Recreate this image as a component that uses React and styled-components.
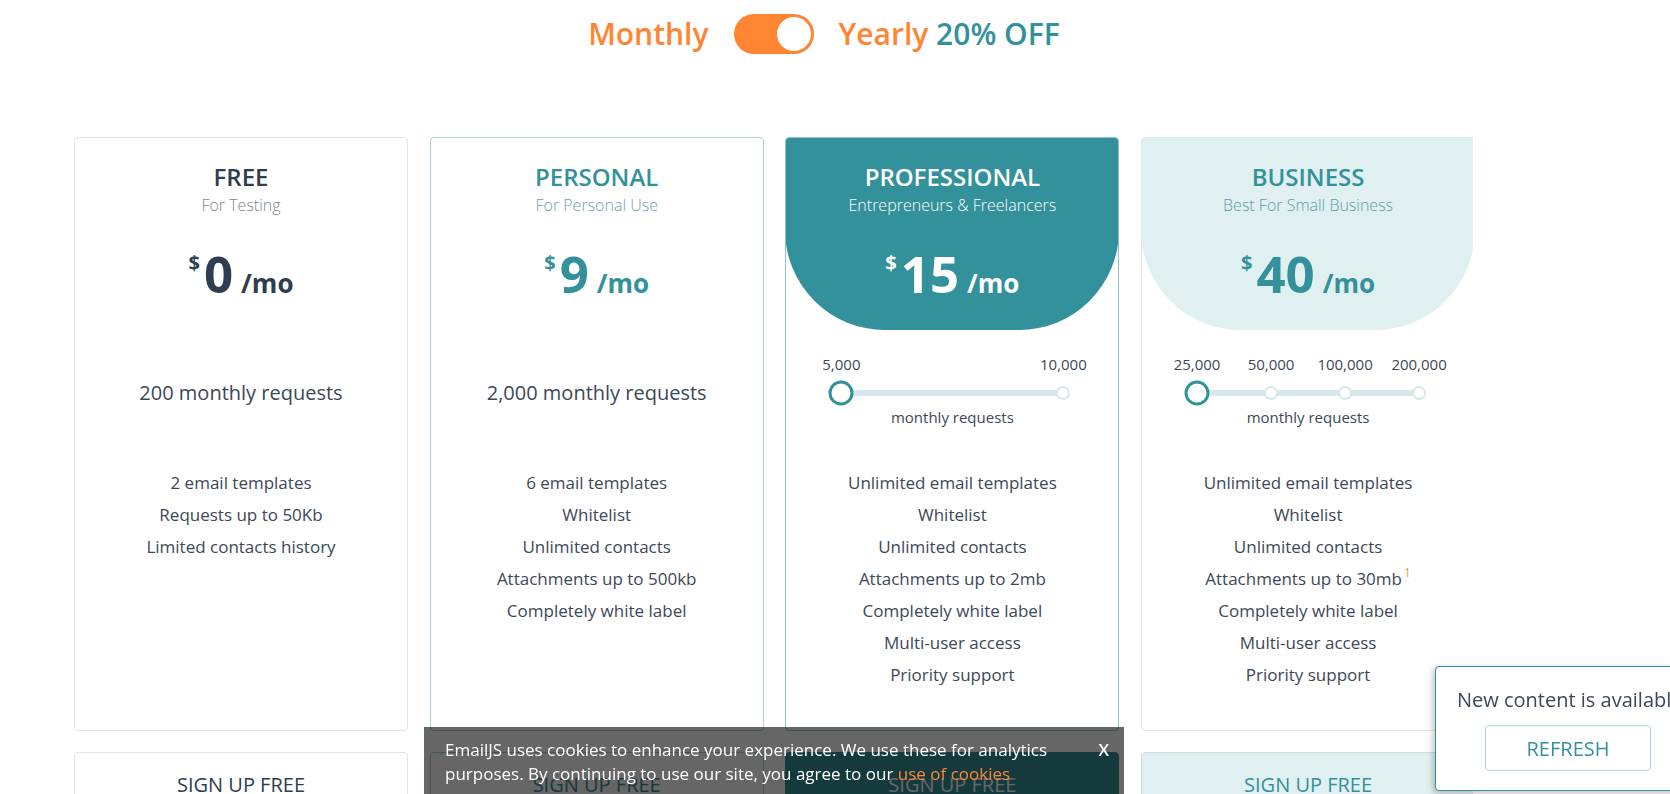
import React, { useState } from 'react';
import styled, { createGlobalStyle, css } from 'styled-components';

const GlobalStyle = createGlobalStyle`
  html, body {
    margin: 0;
    padding: 0;
    background: #fff;
    font-family: "Open Sans", "Noto Sans", sans-serif;
    color: #3c4858;
    overflow: hidden;
  }
  * { box-sizing: border-box; }
`;

const TEAL = '#32919a';
const ORANGE = '#ff8533';
const DARK = '#2c3e50';
const TEXT = '#3c4858';

const Page = styled.div`
  width: 1399px;
  margin-left: 74px;
  padding-top: 13px;
  height: 794px;
  overflow: hidden;
`;

const ToggleRow = styled.div`
  display: grid;
  grid-template-columns: 1fr auto 1fr;
  align-items: center;
  column-gap: 25px;
  height: 40px;
  font-size: 30px;
  font-weight: 600;
`;

const Label = styled.span`
  color: ${ORANGE};
  justify-self: ${(p) => (p.$right ? 'end' : 'start')};
  white-space: nowrap;
`;

const Off = styled.span`
  color: ${TEAL};
`;

const Switch = styled.button`
  width: 80px;
  height: 40px;
  border-radius: 20px;
  border: none;
  padding: 1px;
  background: ${ORANGE};
  display: flex;
  justify-content: ${(p) => (p.$on ? 'flex-end' : 'flex-start')};
  cursor: pointer;
`;

const Knob = styled.span`
  width: 38px;
  height: 38px;
  border-radius: 50%;
  background: #fff;
  border: 2px solid ${ORANGE};
`;

const Cards = styled.div`
  display: grid;
  grid-template-columns: repeat(4, 334px);
  column-gap: 21.7px;
  margin-top: 84px;
`;

const cardBorders = {
  free: '#e1e5e7',
  personal: '#a8d3d6',
  pro: '#8cc6ca',
  business: '#dcecee',
};

const Card = styled.div`
  border: 1px solid ${(p) => cardBorders[p.$kind]};
  border-radius: 4px;
  height: 594px;
  display: flex;
  flex-direction: column;
  overflow: hidden;
`;

const Header = styled.div`
  height: 193px;
  margin: -1px -1px 0;
  padding-top: 24px;
  text-align: center;
  ${(p) =>
    (p.$kind === 'pro' || p.$kind === 'business') &&
    css`
      border-radius: 4px 4px 100px 100px;
      background: ${p.$kind === 'pro' ? TEAL : '#e0f0f0'};
    `}
`;

const titleColor = { free: DARK, personal: TEAL, pro: '#fff', business: TEAL };
const subColor = { free: '#7d8791', personal: '#6aa2a8', pro: '#fff', business: '#5e9da3' };

const Title = styled.div`
  font-size: 24px;
  line-height: 32px;
  font-weight: 600;
  color: ${(p) => titleColor[p.$kind]};
`;

const Sub = styled.div`
  font-size: 16px;
  line-height: 20px;
  font-weight: 300;
  margin-top: 2px;
  color: ${(p) => subColor[p.$kind]};
`;

const Price = styled.div`
  margin-top: 28px;
  display: flex;
  justify-content: center;
  align-items: baseline;
  font-weight: 700;
  line-height: 60px;
  color: ${(p) => (p.$kind === 'free' ? DARK : p.$kind === 'pro' ? '#fff' : TEAL)};
`;

const Dollar = styled.span`
  font-size: 20px;
  align-self: flex-start;
  line-height: 40px;
  margin-right: 4px;
`;

const Amount = styled.span`
  font-size: 51px;
`;

const Per = styled.span`
  font-size: 26px;
  margin-left: 8px;
`;

const Requests = styled.div`
  height: 126px;
  display: flex;
  flex-direction: column;
  justify-content: center;
  align-items: center;
  margin-top: -2px;
`;

const RequestText = styled.div`
  font-size: 20px;
  color: ${TEXT};
  margin-top: 2px;
`;

const Slider = styled.div`
  width: 100%;
  padding: 0 55px;
`;

const Ticks = styled.div`
  position: relative;
  height: 20px;
  font-size: 15px;
  line-height: 20px;
  color: ${TEXT};
`;

const Tick = styled.span`
  position: absolute;
  top: -1px;
  transform: translateX(-50%);
  white-space: nowrap;
`;

const Track = styled.div`
  position: relative;
  height: 6px;
  margin: 14.5px 0 11.5px;
  background: #d6e9ea;
  border-radius: 3px;
`;

const Dot = styled.span`
  position: absolute;
  top: 50%;
  border-radius: 50%;
  background: #fff;
  transform: translate(-50%, -50%);
  ${(p) =>
    p.$active
      ? css`
          width: 25px;
          height: 25px;
          border: 3px solid ${TEAL};
        `
      : css`
          width: 14px;
          height: 14px;
          border: 2px solid #d6e9ea;
        `}
`;

const Caption = styled.div`
  font-size: 15px;
  line-height: 20px;
  text-align: center;
  color: ${TEXT};
`;

const Features = styled.ul`
  list-style: none;
  margin: 0;
  padding: 13px 0 0;
  text-align: center;
`;

const Feature = styled.li`
  font-size: 17px;
  line-height: 32px;
  color: ${TEXT};
`;

const Sup = styled.span`
  position: relative;
  top: -8px;
  line-height: 0;
  color: #ff9642;
  font-size: 12px;
  margin-left: 2px;
`;

const Buttons = styled.div`
  display: grid;
  grid-template-columns: repeat(4, 334px);
  column-gap: 21.7px;
  margin-top: 21px;
`;

const btnStyles = {
  free: css`
    background: #fff;
    color: ${DARK};
    border-color: #e1e5e7;
  `,
  personal: css`
    background: #fff;
    color: ${TEAL};
    border-color: #a8d3d6;
  `,
  pro: css`
    background: ${TEAL};
    color: #fff;
    border-color: ${TEAL};
  `,
  business: css`
    background: #e0f0f0;
    color: ${TEAL};
    border-color: #c6e1e3;
  `,
};

const SignUp = styled.button`
  height: 64px;
  border: 1px solid;
  border-radius: 4px;
  font-family: inherit;
  font-size: 20px;
  text-transform: uppercase;
  padding-top: 2px;
  cursor: pointer;
  ${(p) => btnStyles[p.$kind]};
`;

const Cookie = styled.div`
  position: fixed;
  left: 424px;
  top: 727px;
  width: 700px;
  height: 80px;
  background: rgba(0, 0, 0, 0.6);
  color: #fff;
  display: flex;
  justify-content: space-between;
  align-items: flex-start;
  padding: 11px 15px 0 21px;
`;

const CookieText = styled.p`
  margin: 0;
  max-width: 630px;
  font-size: 17px;
  line-height: 24px;
`;

const CookieLink = styled.a`
  color: ${ORANGE};
  text-decoration: none;
`;

const Close = styled.span`
  font-size: 17px;
  font-weight: 600;
  line-height: 24px;
  cursor: pointer;
`;

const Notice = styled.div`
  position: fixed;
  left: 1435px;
  top: 666px;
  width: 268px;
  height: 125px;
  background: #fff;
  border: 1px solid ${TEAL};
  border-radius: 4px;
  box-shadow: -2px 2px 6px rgba(0, 0, 0, 0.25);
  display: flex;
  flex-direction: column;
  align-items: center;
  padding-top: 19px;
`;

const NoticeText = styled.div`
  font-size: 20px;
  line-height: 28px;
  color: ${TEXT};
  white-space: nowrap;
  align-self: flex-start;
  padding-left: 21px;
`;

const Refresh = styled.button`
  margin-top: 11px;
  margin-left: -2px;
  width: 166px;
  height: 46px;
  background: #fff;
  border: 1px solid #a9d5d8;
  border-radius: 4px;
  color: ${TEAL};
  font-family: inherit;
  font-size: 20px;
  cursor: pointer;
`;

const plans = [
  {
    kind: 'free',
    title: 'FREE',
    sub: 'For Testing',
    price: 0,
    requests: '200 monthly requests',
    features: ['2 email templates', 'Requests up to 50Kb', 'Limited contacts history'],
  },
  {
    kind: 'personal',
    title: 'PERSONAL',
    sub: 'For Personal Use',
    price: 9,
    requests: '2,000 monthly requests',
    features: [
      '6 email templates',
      'Whitelist',
      'Unlimited contacts',
      'Attachments up to 500kb',
      'Completely white label',
    ],
  },
  {
    kind: 'pro',
    title: 'PROFESSIONAL',
    sub: 'Entrepreneurs & Freelancers',
    price: 15,
    steps: ['5,000', '10,000'],
    features: [
      'Unlimited email templates',
      'Whitelist',
      'Unlimited contacts',
      'Attachments up to 2mb',
      'Completely white label',
      'Multi-user access',
      'Priority support',
    ],
  },
  {
    kind: 'business',
    title: 'BUSINESS',
    sub: 'Best For Small Business',
    price: 40,
    steps: ['25,000', '50,000', '100,000', '200,000'],
    features: [
      'Unlimited email templates',
      'Whitelist',
      'Unlimited contacts',
      'Attachments up to 30mb',
      'Completely white label',
      'Multi-user access',
      'Priority support',
    ],
    note: 3,
  },
];

const StepSlider = ({ steps }) => {
  const pos = (i) => `${(i / (steps.length - 1)) * 100}%`;
  return (
    <Slider>
      <Ticks>
        {steps.map((s, i) => (
          <Tick key={s} style={{ left: pos(i) }}>
            {s}
          </Tick>
        ))}
      </Ticks>
      <Track>
        {steps.map((s, i) => (
          <Dot key={s} $active={i === 0} style={{ left: pos(i) }} />
        ))}
      </Track>
      <Caption>monthly requests</Caption>
    </Slider>
  );
};

const App = () => {
  const [yearly, setYearly] = useState(true);

  return (
    <>
      <GlobalStyle />
      <Page>
        <ToggleRow>
          <Label $right>Monthly</Label>
          <Switch $on={yearly} onClick={() => setYearly(!yearly)}>
            <Knob />
          </Switch>
          <Label>
            Yearly <Off>20% OFF</Off>
          </Label>
        </ToggleRow>

        <Cards>
          {plans.map((p) => (
            <Card key={p.kind} $kind={p.kind}>
              <Header $kind={p.kind}>
                <Title $kind={p.kind}>{p.title}</Title>
                <Sub $kind={p.kind}>{p.sub}</Sub>
                <Price $kind={p.kind}>
                  <Dollar>$</Dollar>
                  <Amount>{p.price}</Amount>
                  <Per>/mo</Per>
                </Price>
              </Header>
              <Requests>
                {p.steps ? <StepSlider steps={p.steps} /> : <RequestText>{p.requests}</RequestText>}
              </Requests>
              <Features>
                {p.features.map((f, i) => (
                  <Feature key={f}>
                    {f}
                    {p.note === i && <Sup>1</Sup>}
                  </Feature>
                ))}
              </Features>
            </Card>
          ))}
        </Cards>

        <Buttons>
          {plans.map((p) => (
            <SignUp key={p.kind} $kind={p.kind}>
              Sign up free
            </SignUp>
          ))}
        </Buttons>
      </Page>

      <Cookie>
        <CookieText>
          EmailJS uses cookies to enhance your experience. We use these for analytics purposes. By
          continuing to use our site, you agree to our <CookieLink href="#">use of cookies</CookieLink>
        </CookieText>
        <Close>X</Close>
      </Cookie>

      <Notice>
        <NoticeText>New content is available</NoticeText>
        <Refresh>REFRESH</Refresh>
      </Notice>
    </>
  );
};

export default App;
